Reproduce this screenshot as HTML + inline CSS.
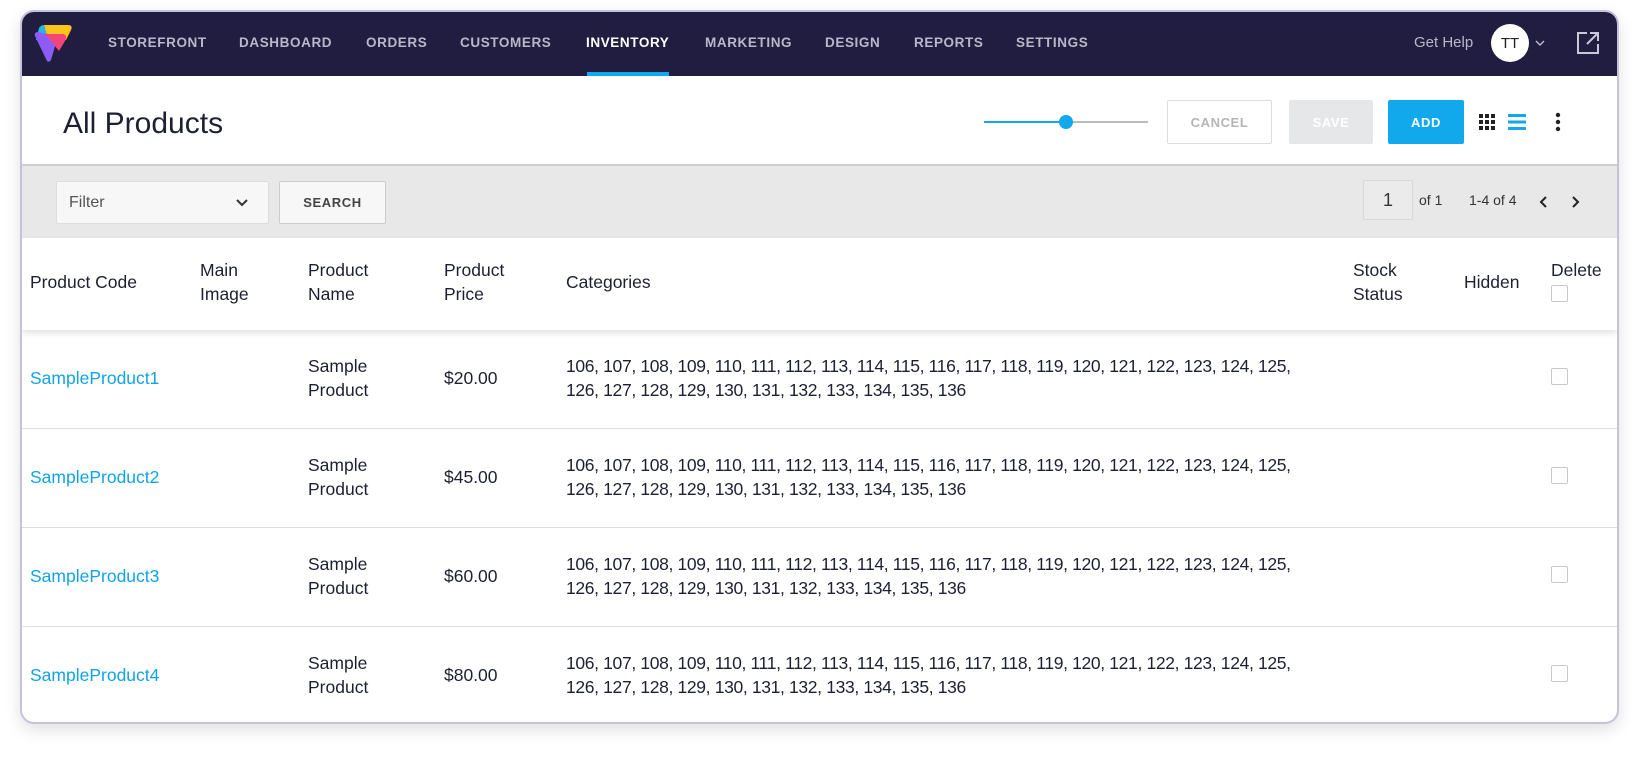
<!DOCTYPE html>
<html><head><meta charset="utf-8"><style>
*{box-sizing:border-box;margin:0;padding:0}
body{width:1640px;height:766px;background:#fff;font-family:"Liberation Sans",sans-serif;color:#1d2033;position:relative;overflow:hidden}
.card{position:absolute;left:20px;top:10px;width:1599px;height:714px;border:2px solid #c6c2dc;border-radius:14px;overflow:hidden;background:#fff;box-shadow:0 6px 16px rgba(0,0,0,.12)}
.nav{position:absolute;left:0;top:0;right:0;height:64px;background:#201d40}
.nav a{position:absolute;top:23px;font-size:13.5px;font-weight:bold;color:#b9b8c9;letter-spacing:.6px}
.nav a.act{color:#fff}
.ul{position:absolute;left:565px;top:60px;width:82px;height:4px;background:#12a8ec}
.hdr{position:absolute;left:0;top:64px;right:0;height:90px;border-bottom:2px solid #cfcfcf}
.ttl{position:absolute;left:41px;top:31px;font-size:30px;color:#1d2033}
.btn{position:absolute;top:24px;height:44px;font-size:13px;font-weight:bold;letter-spacing:.6px;display:flex;align-items:center;justify-content:center;border-radius:2px}
.fb{position:absolute;left:0;top:154px;right:0;height:72px;background:#e8e8e8}
.th{position:absolute;top:226px;left:0;right:0;height:92px;background:#fff;box-shadow:0 3px 6px rgba(0,0,0,.12);z-index:2}
.th div{position:absolute;font-size:17.5px;line-height:24px;color:#1d2033}
.row{position:absolute;left:0;right:0;height:99px;border-bottom:1px solid #ddd}
.row div{position:absolute;font-size:17.5px;line-height:24px;color:#1d2033}
.cb{position:absolute;width:17px;height:17px;border:1.5px solid #c8c8c8;border-radius:2px;background:#fff}
</style></head><body>
<div class="card">
 <div class="nav">
  <svg style="position:absolute;left:10px;top:12px" width="42" height="42" viewBox="0 0 42 42">
   <path d="M12 1 H36 Q41 1 39 6 L34 16 L16 16 Z" fill="#fcc419"/>
   <path d="M7 4 Q9 1 12 1 L16 16 L4 16 Z" fill="#22b8e8"/>
   <path d="M3 12 Q2 8 6 8 L26 12 L19 36 Q16 40 14 35 Z" fill="#8b5cf6"/>
   <path d="M13 10 L31 10 Q36 11 33 17 L27 27 Z" fill="#f2457a"/>
  </svg>
  <a style="left:86px">STOREFRONT</a><a style="left:217px">DASHBOARD</a><a style="left:344px">ORDERS</a><a style="left:438px">CUSTOMERS</a><a class="act" style="left:564px">INVENTORY</a><a style="left:683px">MARKETING</a><a style="left:803px">DESIGN</a><a style="left:892px">REPORTS</a><a style="left:994px">SETTINGS</a>
  <div class="ul"></div>
  <div style="position:absolute;left:1392px;top:22px;font-size:15px;color:#b9b8c9">Get Help</div>
  <div style="position:absolute;left:1469px;top:12px;width:38px;height:38px;border-radius:50%;background:#fff;color:#222;font-size:15px;display:flex;align-items:center;justify-content:center">TT</div>
  <svg style="position:absolute;left:1512px;top:26px" width="12" height="10"><path d="M2 3 L6 7 L10 3" stroke="#b9b8c9" stroke-width="1.5" fill="none"/></svg>
  <svg style="position:absolute;left:1554px;top:19px" width="24" height="24" viewBox="0 0 24 24" fill="none" stroke="#c9c8d6" stroke-width="2"><path d="M11 2 H2 V22 H22 V13"/><path d="M14 2 H22 V10 M22 2 L11 13"/></svg>
 </div>
 <div class="hdr">
  <div class="ttl">All Products</div>
  <div style="position:absolute;left:962px;top:45px;width:82px;height:2px;background:#12a8ec"></div>
  <div style="position:absolute;left:1044px;top:45px;width:82px;height:2px;background:#bbb"></div>
  <div style="position:absolute;left:1037px;top:39px;width:14px;height:14px;border-radius:50%;background:#12a8ec"></div>
  <div class="btn" style="left:1145px;width:105px;border:1.5px solid #ddd;color:#b5b5b5">CANCEL</div>
  <div class="btn" style="left:1267px;width:84px;background:#e6e7e9;color:#fff">SAVE</div>
  <div class="btn" style="left:1366px;width:76px;background:#12a8ec;color:#fff">ADD</div>
  <svg style="position:absolute;left:1457px;top:38px" width="18" height="18"><g fill="#222"><rect x="0" y="0" width="4" height="4"/><rect x="6" y="0" width="4" height="4"/><rect x="12" y="0" width="4" height="4"/><rect x="0" y="6" width="4" height="4"/><rect x="6" y="6" width="4" height="4"/><rect x="12" y="6" width="4" height="4"/><rect x="0" y="12" width="4" height="4"/><rect x="6" y="12" width="4" height="4"/><rect x="12" y="12" width="4" height="4"/></g></svg>
  <svg style="position:absolute;left:1486px;top:38px" width="20" height="18"><g fill="#12a8ec"><rect x="0" y="0" width="18" height="3"/><rect x="0" y="6.5" width="18" height="3"/><rect x="0" y="13" width="18" height="3"/></g></svg>
  <svg style="position:absolute;left:1533px;top:36px" width="6" height="20"><g fill="#222"><circle cx="3" cy="3" r="2.2"/><circle cx="3" cy="10" r="2.2"/><circle cx="3" cy="17" r="2.2"/></g></svg>
 </div>
 <div class="fb">
  <div style="position:absolute;left:34px;top:15px;width:213px;height:43px;background:#f7f7f7;border:1px solid #ddd;border-radius:2px"><span style="position:absolute;left:12px;top:12px;font-size:16px;color:#555">Filter</span><svg style="position:absolute;left:178px;top:16px" width="14" height="10"><path d="M2 2 L7 7 L12 2" stroke="#333" stroke-width="2" fill="none"/></svg></div>
  <div style="position:absolute;left:257px;top:15px;width:107px;height:43px;background:#f7f7f7;border:1px solid #ccc;border-radius:2px;font-size:13px;font-weight:bold;letter-spacing:.6px;color:#444;display:flex;align-items:center;justify-content:center">SEARCH</div>
  <div style="position:absolute;left:1341px;top:14px;width:50px;height:40px;border:1px solid #d8d8d8;background:#ebebeb;font-size:18px;color:#333;text-align:center;line-height:38px">1</div>
  <div style="position:absolute;left:1397px;top:26px;font-size:14px;color:#333">of 1</div>
  <div style="position:absolute;left:1447px;top:26px;font-size:14px;color:#333">1-4 of 4</div>
  <svg style="position:absolute;left:1516px;top:29px" width="12" height="14"><path d="M8 2 L3 7 L8 12" stroke="#222" stroke-width="2" fill="none"/></svg>
  <svg style="position:absolute;left:1547px;top:29px" width="12" height="14"><path d="M4 2 L9 7 L4 12" stroke="#222" stroke-width="2" fill="none"/></svg>
 </div>
 <div class="th">
  <div style="left:8px;top:32px">Product Code</div>
  <div style="left:178px;top:20px">Main<br>Image</div>
  <div style="left:286px;top:20px">Product<br>Name</div>
  <div style="left:422px;top:20px">Product<br>Price</div>
  <div style="left:544px;top:32px">Categories</div>
  <div style="left:1331px;top:20px">Stock<br>Status</div>
  <div style="left:1442px;top:32px">Hidden</div>
  <div style="left:1529px;top:20px">Delete</div>
  <div class="cb" style="left:1529px;top:47px"></div>
 </div>
 <div class="row" style="top:318px"><div style="left:8px;top:36px;color:#12a3e6">SampleProduct1</div><div style="left:286px;top:24px">Sample<br>Product</div><div style="left:422px;top:36px">$20.00</div><div style="left:544px;top:24px;letter-spacing:-.35px">106, 107, 108, 109, 110, 111, 112, 113, 114, 115, 116, 117, 118, 119, 120, 121, 122, 123, 124, 125,<br>126, 127, 128, 129, 130, 131, 132, 133, 134, 135, 136</div><span class="cb" style="left:1529px;top:38px"></span></div>
 <div class="row" style="top:417px"><div style="left:8px;top:36px;color:#12a3e6">SampleProduct2</div><div style="left:286px;top:24px">Sample<br>Product</div><div style="left:422px;top:36px">$45.00</div><div style="left:544px;top:24px;letter-spacing:-.35px">106, 107, 108, 109, 110, 111, 112, 113, 114, 115, 116, 117, 118, 119, 120, 121, 122, 123, 124, 125,<br>126, 127, 128, 129, 130, 131, 132, 133, 134, 135, 136</div><span class="cb" style="left:1529px;top:38px"></span></div>
 <div class="row" style="top:516px"><div style="left:8px;top:36px;color:#12a3e6">SampleProduct3</div><div style="left:286px;top:24px">Sample<br>Product</div><div style="left:422px;top:36px">$60.00</div><div style="left:544px;top:24px;letter-spacing:-.35px">106, 107, 108, 109, 110, 111, 112, 113, 114, 115, 116, 117, 118, 119, 120, 121, 122, 123, 124, 125,<br>126, 127, 128, 129, 130, 131, 132, 133, 134, 135, 136</div><span class="cb" style="left:1529px;top:38px"></span></div>
 <div class="row" style="top:615px;border-bottom:none"><div style="left:8px;top:36px;color:#12a3e6">SampleProduct4</div><div style="left:286px;top:24px">Sample<br>Product</div><div style="left:422px;top:36px">$80.00</div><div style="left:544px;top:24px;letter-spacing:-.35px">106, 107, 108, 109, 110, 111, 112, 113, 114, 115, 116, 117, 118, 119, 120, 121, 122, 123, 124, 125,<br>126, 127, 128, 129, 130, 131, 132, 133, 134, 135, 136</div><span class="cb" style="left:1529px;top:38px"></span></div>
</div>
</body></html>
